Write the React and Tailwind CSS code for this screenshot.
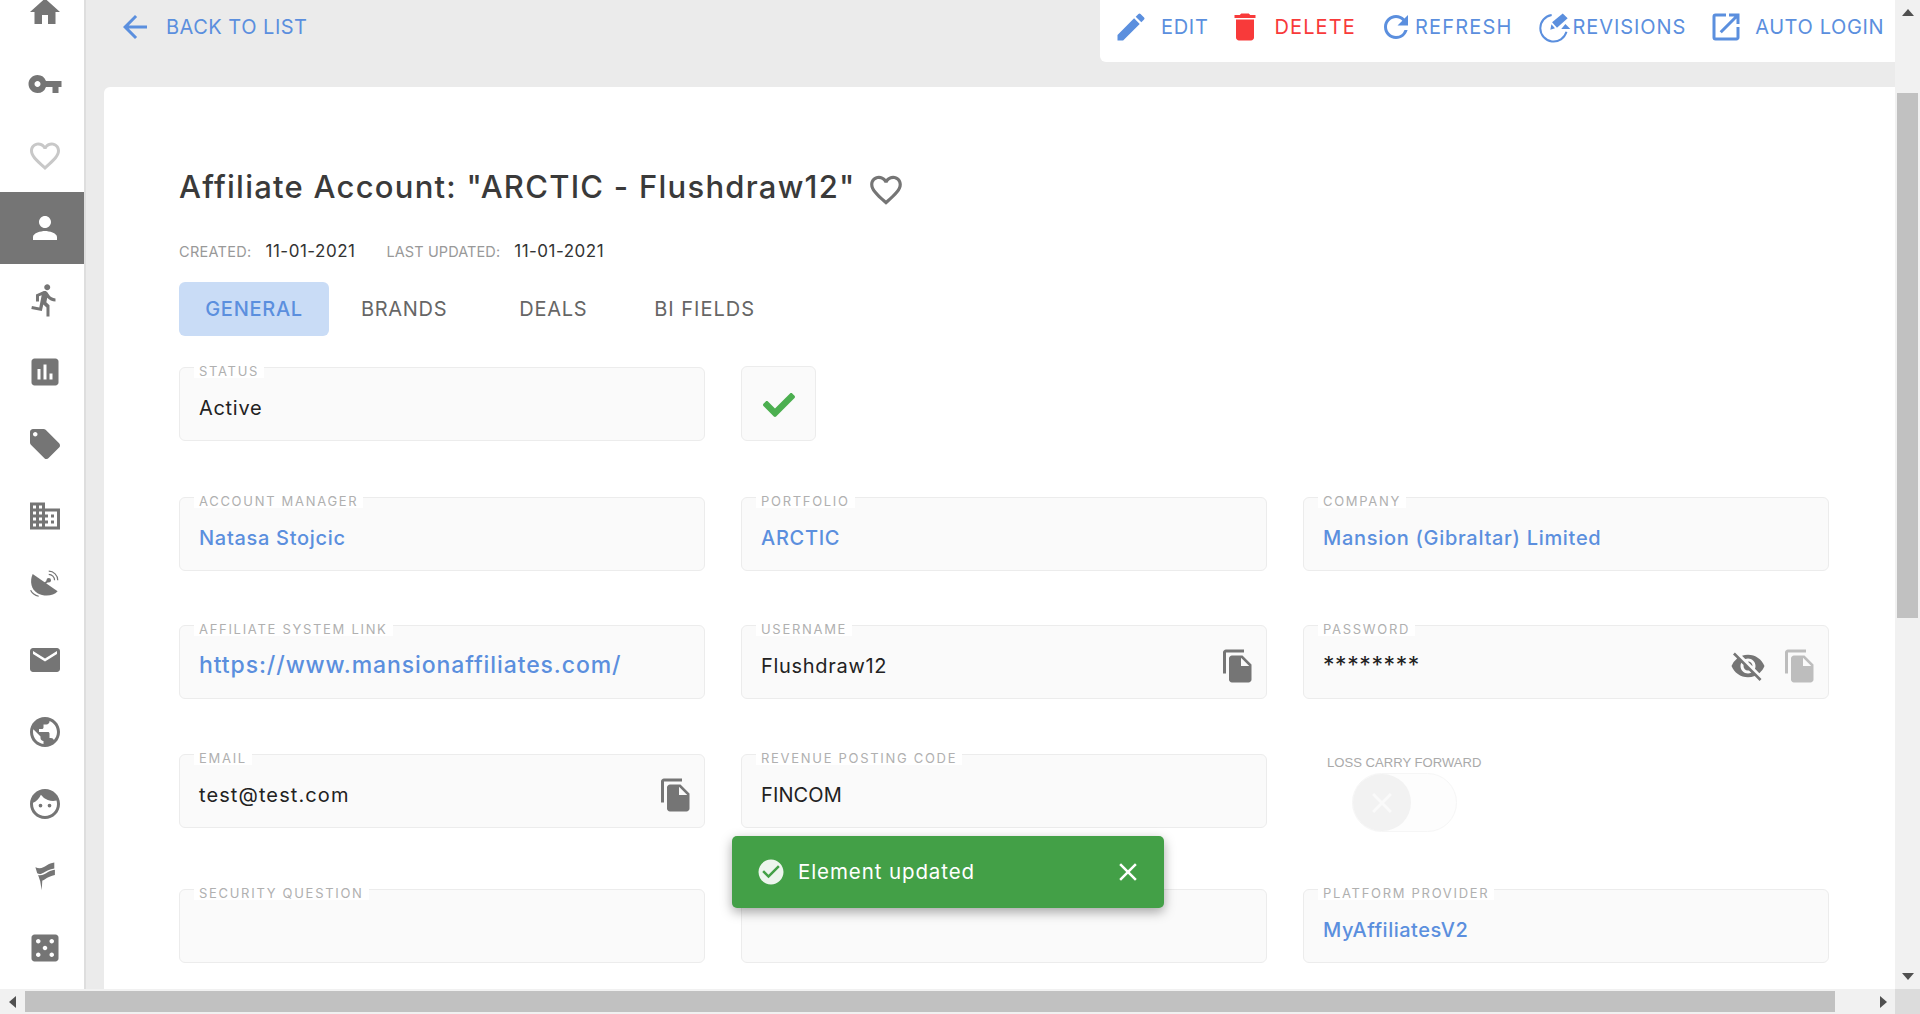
import React from "react";
import {
  MdHome, MdVpnKey, MdFavoriteBorder, MdPerson, MdDirectionsRun, MdAssessment, MdLocalOffer,
  MdDomain, MdEmail, MdPublic, MdFace, MdCasino, MdEdit, MdDelete, MdRefresh, MdOpenInNew,
  MdFileCopy, MdVisibilityOff, MdArrowBack, MdCheckCircle, MdClose,
} from "react-icons/md";
import { FaCheck } from "react-icons/fa";

const font = { fontFamily: '"Inter", "Open Sans", sans-serif' };

const SatelliteIcon = ({ className }) => (
  <svg viewBox="0 0 24 24" className={className} fill="currentColor">
    <path d="M3.8 2.7C1.6 7.500 2.800 13 7 15.500C11.500 18 17.500 17.500 20.400 14.200z" />
    <path d="M11 9.500 14 7.300" stroke="currentColor" strokeWidth="1.200" />
    <circle cx="14.500" cy="6.800" r="1.500" />
    <path d="M14.500 2.900a3.900 3.900 0 0 1 3.900 3.900M14.500 .8a6 6 0 0 1 6 6" fill="none" stroke="currentColor" strokeWidth=".8" />
    <path d="M2.400 13.500c1 2 2.900 3.400 5.400 4" fill="none" stroke="currentColor" strokeWidth=".8" />
  </svg>
);

const FlagIcon = ({ className }) => (
  <svg viewBox="0 0 24 24" className={className} fill="currentColor">
    <path d="M5.600 6.200C9 7.600 11 6.300 13 5S16 3.300 18.200 3V7C15 7.400 13 8.700 11 9.800S8 10.800 6.800 10.200z" />
    <path d="M7.400 11.400C10 12 12 10.600 14 9.400S17 8 18.600 7.800V11.400C16 11.800 14 13 12 14.200S10.500 15 10.200 15L9.800 21.500 8.800 15.500z" />
  </svg>
);

const RevisionsIcon = ({ className }) => (
  <svg viewBox="0 0 24 24" className={className} fill="currentColor">
    <path d="M9.500 3A10 10 0 1 0 20.600 15.600" fill="none" stroke="currentColor" strokeWidth="1.500" />
    <path d="M9.800 8.500 17.800 1.800 21.500 5.500 13.500 12.500z" />
    <path d="M8.500 14 9.300 10 12 12.900z" />
    <path d="M19.800 9.800 23.500 13.500H16.700z" />
  </svg>
);

const sideIcons = [
  { Icon: MdHome },
  { Icon: MdVpnKey },
  { Icon: MdFavoriteBorder, className: "text-[#c8c8c8]" },
  { Icon: MdPerson, active: true },
  { Icon: MdDirectionsRun },
  { Icon: MdAssessment },
  { Icon: MdLocalOffer },
  { Icon: MdDomain },
  { Icon: SatelliteIcon },
  { Icon: MdEmail },
  { Icon: MdPublic },
  { Icon: MdFace },
  { Icon: FlagIcon },
  { Icon: MdCasino },
];

const Sidebar = () => (
  <div className="w-[86px] shrink-0 bg-white border-r-2 border-[#dedede] h-full overflow-hidden">
    <div className="-mt-6 w-[84px]">
      {sideIcons.map(({ Icon, active, className }, index) => (
        <div
          key={index}
          className={`h-[72px] flex items-center justify-center pl-[6px] ${active ? "bg-[#757575] text-white" : "text-[#757575]"} ${className || ""}`}
        >
          <Icon className="w-[36px] h-[36px]" />
        </div>
      ))}
    </div>
  </div>
);

const actions = [
  { label: "EDIT", Icon: MdEdit, gap: "gap-[12px]", size: "w-[36px] h-[36px]", ml: "ml-0", track: "tracking-[0.7px]" },
  { label: "DELETE", Icon: MdDelete, gap: "gap-[12px]", size: "w-[36px] h-[36px]", ml: "ml-[18px]", track: "tracking-[1.1px]", red: true },
  { label: "REFRESH", Icon: MdRefresh, gap: "gap-[1px]", size: "w-[36px] h-[36px]", ml: "ml-[22px]", track: "tracking-[1.2px]" },
  { label: "REVISIONS", Icon: RevisionsIcon, gap: "gap-[2px]", size: "w-[32px] h-[32px]", ml: "ml-[26px]", track: "tracking-[0.9px]" },
  { label: "AUTO LOGIN", Icon: MdOpenInNew, gap: "gap-[11px]", size: "w-[36px] h-[36px]", ml: "ml-[22px]", track: "tracking-[0.6px]" },
];

const TopBar = () => (
  <div className="h-[87px] flex items-start justify-between shrink-0">
    <div className="flex items-center h-[54px] pl-[13px] text-[#5b8fde] text-[20px] tracking-[0.5px]">
      <MdArrowBack className="w-[36px] h-[36px]" />
      <span className="ml-[13px]">BACK TO LIST</span>
    </div>
    <div className="h-[62px] w-[795px] bg-white rounded-bl-[6px] flex items-center pl-[13px] pb-[8px] text-[20px] text-[#5b8fde]">
      {actions.map(({ label, Icon, gap, size, ml, track, red }) => (
        <div key={label} className={`flex items-center ${gap} ${ml} ${red ? "text-[#f83a3a]" : ""}`}>
          <Icon className={size} />
          <span className={track}>{label}</span>
        </div>
      ))}
    </div>
  </div>
);

const Field = ({ label, value, link, className, children, valueClass }) => (
  <div className={`relative h-[74px] bg-[#fafafa] border border-[#ececec] rounded-[6px] flex items-center pl-[19px] pr-[10px] ${className || ""}`}>
    {label && (
      <span className="absolute left-[14px] -top-[4px] bg-white px-[5px] text-[13px] leading-[14px] tracking-[1.700px] text-[#b0b0b0]">
        {label}
      </span>
    )}
    <span className={`flex-1 pt-[7px] text-[20px] ${link ? "text-[#5b8fde] font-medium" : "text-[#222]"} ${valueClass || "tracking-[0.7px]"}`}>
      {value}
    </span>
    {children}
  </div>
);

const CopyIcon = ({ faded }) => (
  <MdFileCopy className={`w-[36px] h-[36px] mt-[7px] ${faded ? "text-[#bdbdbd]" : "text-[#757575]"}`} />
);

const Row = ({ children, className }) => (
  <div className={`grid grid-cols-[526px_526px_526px] gap-x-[36px] ${className || ""}`}>{children}</div>
);

const Tabs = () => (
  <div className="flex items-center text-[20px] tracking-[0.7px] text-[#666] mt-[18px] h-[54px]">
    <div className="w-[150px] h-full flex items-center justify-center rounded-[6px] bg-[#c9dcf6] text-[#5b8fde] font-medium">GENERAL</div>
    <div className="ml-[32px]">BRANDS</div>
    <div className="ml-[72px]">DEALS</div>
    <div className="ml-[67px] tracking-[1px]">BI FIELDS</div>
  </div>
);

const Content = () => (
  <div className="flex-1 min-w-0 mr-0 bg-white rounded-tl-[6px] pl-[75px] pt-[80px] overflow-hidden">
    <div className="flex items-center h-[40px]">
      <h1 className="text-[31px] font-medium tracking-[1.250px] text-[#3a3a3a] leading-[40px]">Affiliate Account: "ARCTIC - Flushdraw12"</h1>
      <MdFavoriteBorder className="ml-[11px] mt-[5px] w-[38px] h-[38px] text-[#757575]" />
    </div>
    <div className="flex items-center h-[24px] mt-[33px]">
      <span className="text-[14.500px] tracking-[0.3px] text-[#999]">CREATED:</span>
      <span className="ml-[14px] text-[17px] tracking-[0.5px] text-[#333]">11-01-2021</span>
      <span className="ml-[31px] text-[14.500px] tracking-[0.1px] text-[#999]">LAST UPDATED:</span>
      <span className="ml-[14px] text-[17px] tracking-[0.5px] text-[#333]">11-01-2021</span>
    </div>
    <Tabs />
    <Row className="mt-[31px]">
      <Field label="STATUS" value="Active" />
      <div className="w-[75px] h-[75px] -mt-px bg-[#fafafa] border border-[#ececec] rounded-[6px] flex items-center justify-center pt-[2px]">
        <FaCheck className="w-[32px] h-[32px] text-[#4caf50]" />
      </div>
    </Row>
    <Row className="mt-[56px]">
      <Field label="ACCOUNT MANAGER" value="Natasa Stojcic" link />
      <Field label="PORTFOLIO" value="ARCTIC" link />
      <Field label="COMPANY" value="Mansion (Gibraltar) Limited" link />
    </Row>
    <Row className="mt-[54px]">
      <Field label="AFFILIATE SYSTEM LINK" value="https://www.mansionaffiliates.com/" link valueClass="text-[23px] tracking-[0.9px]" />
      <Field label="USERNAME" value="Flushdraw12">
        <CopyIcon />
      </Field>
      <Field label="PASSWORD" value="********" valueClass="text-[23px] tracking-[0.6px]">
        <MdVisibilityOff className="w-[36px] h-[36px] mt-[7px] text-[#757575] mr-[16px]" />
        <CopyIcon faded />
      </Field>
    </Row>
    <Row className="mt-[55px]">
      <Field label="EMAIL" value="test@test.com" valueClass="tracking-[1.100px]">
        <CopyIcon />
      </Field>
      <Field label="REVENUE POSTING CODE" value="FINCOM" valueClass="tracking-[0.1px]" />
      <div className="pl-[24px] pt-[1px]">
        <div className="text-[13.100px] leading-[16px] text-[#aaa]" style={{ fontFamily: '"Liberation Sans", sans-serif' }}>LOSS CARRY FORWARD</div>
        <div className="ml-[25px] mt-[2px] w-[105px] h-[59px] rounded-full bg-[#fdfdfd] border border-[#f6f6f6]">
          <div className="w-[58px] h-[57px] rounded-full bg-[#f2f2f2] flex items-center justify-center">
            <MdClose className="w-[34px] h-[34px] text-[#fafafa]" />
          </div>
        </div>
      </div>
    </Row>
    <Row className="mt-[57px]">
      <Field label="SECURITY QUESTION" value="" />
      <Field label="" value="" />
      <Field label="PLATFORM PROVIDER" value="MyAffiliatesV2" link valueClass="tracking-[0.5px]" />
    </Row>
  </div>
);

const Toast = () => (
  <div className="absolute left-[732px] top-[836px] w-[432px] h-[72px] rounded-[5px] bg-[#43a047] text-white flex items-center pl-[24px] pr-[21px] shadow-[0_4px_12px_rgba(0,0,0,0.35)]">
    <MdCheckCircle className="w-[30px] h-[30px] text-[#edf5ee]" />
    <span className="ml-[12px] flex-1 text-[20.500px] tracking-[0.9px]">Element updated</span>
    <MdClose className="w-[30px] h-[30px]" />
  </div>
);

const VerticalScrollbar = () => (
  <div className="w-[25px] shrink-0 bg-[#f1f1f1] flex flex-col items-center">
    <div className="h-[25px] flex items-center justify-center">
      <div className="w-0 h-0 border-x-[6px] border-x-transparent border-b-[7px] border-b-[#505050]" />
    </div>
    <div className="w-[21px] h-[525px] mt-[68px] bg-[#c1c1c1]" />
    <div className="flex-1" />
    <div className="h-[25px] flex items-center justify-center">
      <div className="w-0 h-0 border-x-[6px] border-x-transparent border-t-[7px] border-t-[#505050]" />
    </div>
  </div>
);

const HorizontalScrollbar = () => (
  <div className="h-[25px] shrink-0 bg-[#f1f1f1] flex items-center">
    <div className="w-[25px] flex items-center justify-center">
      <div className="w-0 h-0 border-y-[6px] border-y-transparent border-r-[7px] border-r-[#505050]" />
    </div>
    <div className="w-[1810px] h-[21px] bg-[#c1c1c1]" />
    <div className="flex-1 flex items-center justify-end pr-[8px]">
      <div className="w-0 h-0 border-y-[6px] border-y-transparent border-l-[7px] border-l-[#505050]" />
    </div>
    <div className="w-[25px] h-full bg-[#dcdcdc]" />
  </div>
);

export default function App() {
  return (
    <div className="relative w-[1920px] h-[1014px] overflow-hidden flex flex-col bg-[#ebebeb]" style={font}>
      <div className="flex flex-1 min-h-0">
        <Sidebar />
        <div className="flex-1 min-w-0 flex flex-col pl-[18px]">
          <TopBar />
          <Content />
        </div>
        <VerticalScrollbar />
      </div>
      <HorizontalScrollbar />
      <Toast />
    </div>
  );
}
